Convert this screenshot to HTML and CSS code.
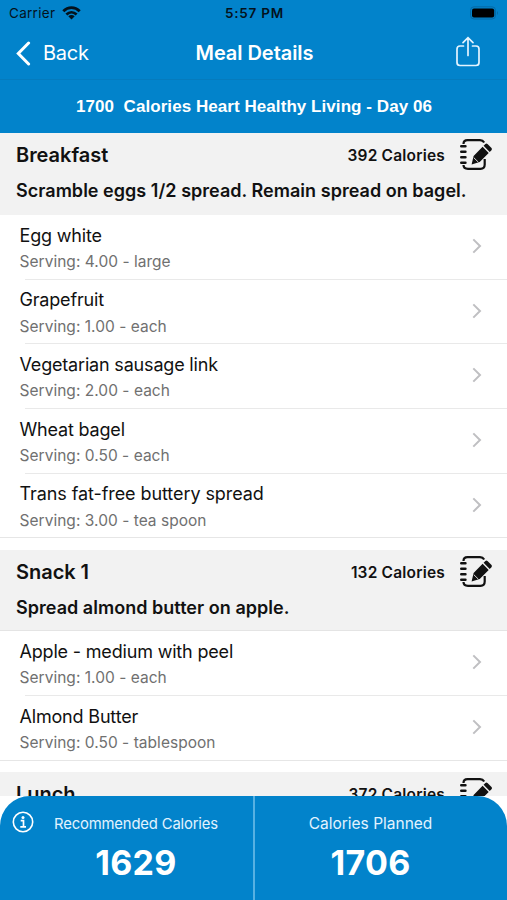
FILE: index.html
```
<!DOCTYPE html>
<html lang="en">
<head>
<meta charset="utf-8">
<title>Meal Details</title>
<link rel="stylesheet" href="styles.css">
</head>
<body>
<svg class="defs" aria-hidden="true">
  <symbol id="edit" viewBox="0 0 34 34">
    <g fill="none" stroke="currentColor">
      <path stroke-width="2.200" d="M4.500 6C4.500 3.500 6 2.200 8.500 2.200H21C23 2.200 24.300 3 25.200 4.500M25.700 21V26.500C25.700 29.300 24.300 30.800 21.500 30.800H9C6 30.800 4.500 29.300 4.500 27"/>
      <path stroke-width="2.600" stroke-linecap="round" d="M2.300 8.300H6.400M2.300 13.800H6.400M2.300 19.300H6.400M2.300 24.800H6.400"/>
    </g>
    <path fill="currentColor" d="M12.600 26.600L14.600 18L23.600 8.800L29.700 14.900L20.700 24Z M24.600 7.800L26.400 6Q27.400 5.100 28.500 6.100L32.500 10.100Q33.400 11.200 32.500 12.200L30.700 13.900Z"/>
    <path fill="none" stroke="#f2f2f2" stroke-width=".9" d="M14.800 19.700L19.300 24.100"/>
  </symbol>
  <symbol id="chev" viewBox="0 0 10 16"><path fill="none" stroke="currentColor" stroke-width="2" d="M1.300 1.400L8 8L1.300 14.600"/></symbol>
</svg>
<div class="app">
  <header>
    <div class="status">
      <div class="carrier"><span>Carrier</span>
        <svg width="19" height="14" viewBox="0 0 19 14"><g fill="none" stroke="#04121c" stroke-width="2.800"><path d="M1.300 5.200C6 .4 13 .4 17.700 5.200"/><path d="M4.400 8.500C7.500 5.600 11.500 5.600 14.600 8.500"/></g><path fill="#04121c" d="M6.300 10.300Q9.500 7.800 12.700 10.300L9.500 13.500Z"/></svg>
      </div>
      <span class="time">5:57 PM</span>
      <svg class="battery" width="30" height="14" viewBox="0 0 30 14"><rect x=".5" y=".8" width="25" height="12.200" rx="3.500" fill="none" stroke="#066aa5"/><rect x="2" y="2.400" width="22.200" height="9" rx="2" fill="#000"/><path fill="#066aa5" d="M27 4.900Q29 6.900 27 8.900Z"/></svg>
    </div>
    <nav>
      <div class="back">
        <svg width="15" height="25" viewBox="0 0 15 25"><path d="M12.600 2L2.300 12.500L12.600 23" fill="none" stroke="#fff" stroke-width="3" stroke-linecap="round"/></svg>
        <span>Back</span>
      </div>
      <h1>Meal Details</h1>
      <svg class="share" width="26" height="32" viewBox="0 0 26 32"><path d="M8.500 10H5Q2 10 2 13V26.500Q2 29.500 5 29.500H21Q24 29.500 24 26.500V13Q24 10 21 10H17.500M13 19.500V2.200M8 6.700L13 1.700L18 6.700" fill="none" stroke="#e4f4ff" stroke-width="1.700" stroke-linecap="round"/></svg>
    </nav>
    <div class="plan">1700&nbsp; Calories Heart Healthy Living - Day 06</div>
  </header>
  <main>
    <section>
      <div class="meal"><div class="top"><h2>Breakfast</h2><span class="cal">392 Calories</span><svg class="edit"><use href="#edit"/></svg></div><p>Scramble eggs 1/2 spread. Remain spread on bagel.</p></div>
      <ul>
        <li><div><b>Egg white</b><i>Serving: 4.00 - large</i></div><svg><use href="#chev"/></svg></li>
        <li><div><b>Grapefruit</b><i>Serving: 1.00 - each</i></div><svg><use href="#chev"/></svg></li>
        <li><div><b>Vegetarian sausage link</b><i>Serving: 2.00 - each</i></div><svg><use href="#chev"/></svg></li>
        <li><div><b>Wheat bagel</b><i>Serving: 0.50 - each</i></div><svg><use href="#chev"/></svg></li>
        <li><div><b class="wide">Trans fat-free buttery spread</b><i>Serving: 3.00 - tea spoon</i></div><svg><use href="#chev"/></svg></li>
      </ul>
    </section>
    <section>
      <div class="meal ruled"><div class="top"><h2>Snack 1</h2><span class="cal">132 Calories</span><svg class="edit"><use href="#edit"/></svg></div><p>Spread almond butter on apple.</p></div>
      <ul>
        <li><div><b>Apple - medium with peel</b><i>Serving: 1.00 - each</i></div><svg><use href="#chev"/></svg></li>
        <li><div><b>Almond Butter</b><i>Serving: 0.50 - tablespoon</i></div><svg><use href="#chev"/></svg></li>
      </ul>
    </section>
    <section>
      <div class="meal"><div class="top"><h2>Lunch</h2><span class="cal">372 Calories</span><svg class="edit"><use href="#edit"/></svg></div></div>
    </section>
  </main>
  <footer>
    <div class="totals">
      <div class="total first">
        <svg class="info" width="22" height="22" viewBox="0 0 22 22"><circle cx="11" cy="11" r="9.700" fill="none" stroke="#fff" stroke-width="1.600"/><circle cx="11" cy="6.400" r="1.500" fill="#fff"/><path d="M8.700 9.600H11.500V15.600M8.300 15.800H14" fill="none" stroke="#fff" stroke-width="1.700"/></svg>
        <span class="label rec">Recommended Calories</span><strong>1629</strong>
      </div>
      <div class="total"><span class="label">Calories Planned</span><strong>1706</strong></div>
    </div>
  </footer>
</div>
</body>
</html>
```
FILE: styles.css
```
* { box-sizing: border-box; margin: 0; padding: 0; }
body { font-family: Inter, "Liberation Sans", sans-serif; color: #111; background: #fff; }
.defs { display: none; }
.app { width: 507px; height: 900px; display: flex; flex-direction: column; overflow: hidden; }
header { flex: none; height: 133px; background: #0283cb; color: #fff; }
.status { height: 27px; display: grid; grid-template-columns: 1fr auto 1fr; align-items: center; padding: 0 7px 0 9px; color: #04121c; font-size: 13.5px; line-height: 27px; }
.carrier { display: flex; align-items: center; gap: 7px; letter-spacing: .29px; }
.carrier svg { margin-top: -2px; }
.time { font-weight: 600; letter-spacing: .8px; }
.battery { justify-self: end; margin-top: -1px; }
nav { height: 53px; display: grid; grid-template-columns: 1fr auto 1fr; align-items: center; padding: 0 26px 0 16px; border-bottom: 1px solid #057bbd; }
.back { display: flex; align-items: center; gap: 12px; font-size: 20px; letter-spacing: -.24px; }
h1 { font-size: 20px; font-weight: 600; letter-spacing: -.05px; margin-left: 12px; }
.share { justify-self: end; margin-top: -3px; }
.plan { height: 53px; padding-left: 1px; font: bold 17px/53px "Liberation Sans", sans-serif; letter-spacing: .06px; text-align: center; }
main { flex: none; height: 663px; overflow: hidden; }
section { margin-bottom: 11.600px; }
.meal { height: 82px; padding-left: 16px; background: #f2f2f2; }
.ruled { height: 81.400px; border-bottom: 1px solid #e4e4e4; }
.top { display: flex; align-items: center; height: 44px; padding-right: 14px; }
h2 { flex: 1; font-size: 20px; font-weight: 600; letter-spacing: -.03px; }
.cal { font-size: 15.500px; font-weight: 600; letter-spacing: .19px; margin-right: 14px; }
.edit { width: 34px; height: 34px; color: #111; }
.meal p { padding-top: 1px; font-size: 18px; font-weight: 600; line-height: 26px; letter-spacing: .03px; }
ul { list-style: none; border-bottom: 1px solid #e6e6e6; }
li { height: 64.700px; display: flex; justify-content: space-between; padding: 9.500px 25px 0 19.500px; }
li:first-child { height: 63.700px; padding-top: 8.500px; }
li + li { background: linear-gradient(#e9e9e9, #e9e9e9) 25px 0 / 100% 1px no-repeat; }
li b { display: block; font-size: 18px; font-weight: 400; line-height: 24px; letter-spacing: -.18px; }
li b.wide { letter-spacing: -.08px; }
li i { display: block; margin-top: 4.500px; font-size: 15.500px; font-style: normal; line-height: 20px; letter-spacing: .03px; color: #707070; }
li svg { width: 10px; height: 16px; margin-top: 14.500px; color: #bfbfc2; }
footer { flex: none; height: 104px; background: #fff; }
.totals { display: flex; height: 104px; background: #0283cb; border-radius: 30px 30px 0 0; color: #fff; }
.total { flex: 1; display: flex; flex-direction: column; align-items: center; padding-top: 16px; padding-right: 21px; }
.first { position: relative; flex: 0 0 255px; padding: 16px 0 0 19px; border-right: 2px solid #57b1e2; }
.info { position: absolute; left: 12px; top: 15px; }
.label { font-size: 15.500px; line-height: 24px; color: #e2f3ff; }
.rec { font-size: 14.800px; letter-spacing: -.15px; }
strong { font-size: 34px; font-weight: 700; line-height: 54px; letter-spacing: .3px; }
```
